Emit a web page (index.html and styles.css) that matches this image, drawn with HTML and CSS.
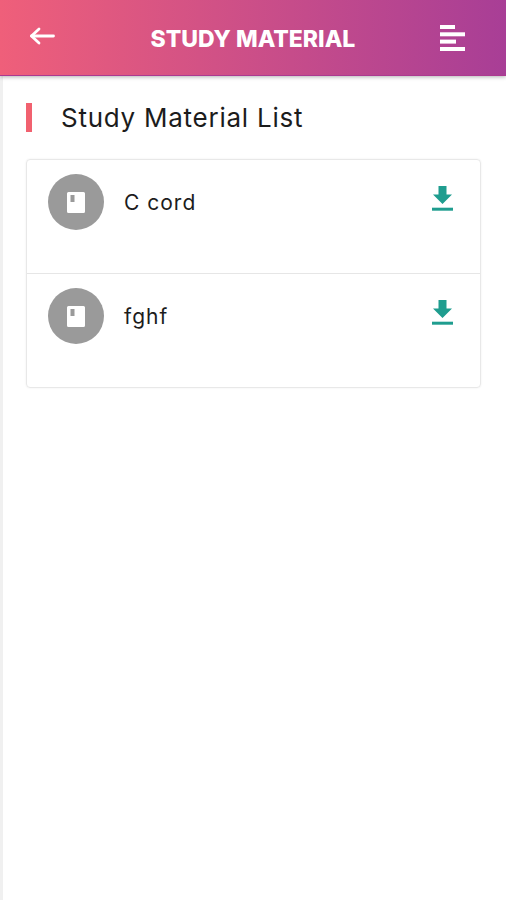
FILE: index.html
```html
<!DOCTYPE html>
<html lang="en">
<head>
    <meta charset="UTF-8">
    <meta name="viewport" content="width=device-width, initial-scale=1.0">
    <title>Study Material</title>
    <link rel="stylesheet" href="styles.css">
</head>
<body>
    <header class="top-bar">
        <button type="button" class="icon-btn" aria-label="Back">
            <svg class="back-icon" viewBox="0 0 26 18" fill="none" stroke="currentColor" stroke-width="2.8" stroke-linecap="round" stroke-linejoin="round"><path d="M24.5 9H2.5"/><path d="M10 2 2.5 9l7.5 7"/></svg>
        </button>
        <h1 class="page-title">STUDY MATERIAL</h1>
        <button type="button" class="icon-btn" aria-label="Menu">
            <svg class="menu-icon" viewBox="0 0 25 26" fill="currentColor"><rect x="0" y="0" width="15" height="4"/><rect x="0" y="7.300" width="25" height="4"/><rect x="0" y="14.600" width="16" height="4"/><rect x="0" y="22" width="25" height="4"/></svg>
        </button>
    </header>

    <main class="content">
        <h2 class="section-title">Study Material List</h2>

        <ul class="material-list">
            <li class="material-item">
                <span class="avatar">
                    <svg viewBox="0 0 18 21" width="18" height="21"><path fill="#fff" d="M1.500 0h15A1.500 1.500 0 0 1 18 1.500v18a1.500 1.500 0 0 1-1.500 1.500h-15A1.500 1.500 0 0 1 0 19.500v-18A1.500 1.500 0 0 1 1.500 0z"/><rect x="3.500" y="3" width="4" height="7" fill="#9a9a9a"/></svg>
                </span>
                <span class="material-name">C cord</span>
                <svg class="download-icon" viewBox="0 0 21 25" fill="currentColor"><path d="M6.500 0h8v8.500H20L10.500 18 1 8.500h5.500z"/><rect x="0" y="21.700" width="21" height="3"/></svg>
            </li>
            <li class="material-item">
                <span class="avatar">
                    <svg viewBox="0 0 18 21" width="18" height="21"><path fill="#fff" d="M1.500 0h15A1.500 1.500 0 0 1 18 1.500v18a1.500 1.500 0 0 1-1.500 1.500h-15A1.500 1.500 0 0 1 0 19.500v-18A1.500 1.500 0 0 1 1.500 0z"/><rect x="3.500" y="3" width="4" height="7" fill="#9a9a9a"/></svg>
                </span>
                <span class="material-name">fghf</span>
                <svg class="download-icon" viewBox="0 0 21 25" fill="currentColor"><path d="M6.500 0h8v8.500H20L10.500 18 1 8.500h5.500z"/><rect x="0" y="21.700" width="21" height="3"/></svg>
            </li>
        </ul>
    </main>
</body>
</html>
```

FILE: styles.css
```css
* {
    margin: 0;
    padding: 0;
    box-sizing: border-box;
}

body {
    font-family: 'Inter', 'Liberation Sans', sans-serif;
    background: #fff;
    height: 900px;
    overflow: hidden;
    display: flex;
    flex-direction: column;
}

.top-bar {
    height: 76px;
    flex-shrink: 0;
    padding: 0 41px 2px 29px;
    display: flex;
    justify-content: space-between;
    align-items: center;
    background: linear-gradient(90deg, #ef5f7a 0%, #a83e96 100%);
    border-bottom: 1px solid #ab3a90;
    box-shadow: 0 1px 4px rgba(0, 0, 0, 0.3);
    color: #fff;
    position: relative;
}

.icon-btn {
    background: none;
    border: none;
    color: #fff;
    display: flex;
}

.back-icon {
    width: 26px;
    height: 18px;
    margin-bottom: 1px;
}

.menu-icon {
    width: 25px;
    height: 26px;
    margin-top: 3px;
}

.page-title {
    font-size: 23px;
    font-weight: 800;
    margin-left: 11px;
    margin-top: 5px;
}

.content {
    flex: 1;
    padding: 27px 25px 0 23px;
    border-left: 3px solid #f0f0f0;
}

.section-title {
    height: 29px;
    padding-left: 29px;
    border-left: 6px solid #f1616f;
    font-size: 26px;
    font-weight: 400;
    letter-spacing: 0.75px;
    line-height: 30px;
    color: #1c1c1c;
    margin-bottom: 27px;
}

.material-list {
    list-style: none;
    border: 1px solid #e8e8e8;
    border-radius: 4px;
    box-shadow: 0 0 2px rgba(0, 0, 0, 0.08);
}

.material-item {
    height: 114px;
    padding: 14px 27px 0 21px;
    display: flex;
    align-items: flex-start;
    border-bottom: 1px solid #e6e6e6;
}

.material-item:last-child {
    height: 113px;
    border-bottom: none;
}

.avatar {
    width: 56px;
    height: 56px;
    flex-shrink: 0;
    border-radius: 50%;
    background: #9a9a9a;
    display: flex;
    justify-content: center;
    align-items: center;
}

.material-name {
    flex: 1;
    margin-left: 20px;
    margin-top: 15px;
    font-size: 21px;
    letter-spacing: 1px;
    line-height: 28px;
    color: #1c1c1c;
}

.download-icon {
    width: 21px;
    height: 25px;
    margin-top: 12px;
    color: #1f9d8f;
}
```
